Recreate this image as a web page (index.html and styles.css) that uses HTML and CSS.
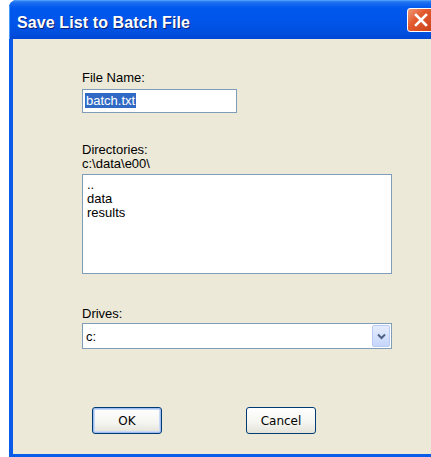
FILE: index.html
```html
<!DOCTYPE html>
<html>
<head>
<meta charset="utf-8">
<title>Save List to Batch File</title>
<link rel="stylesheet" href="styles.css">
</head>
<body>
<div class="window">
  <div class="titlebar">
    <span class="title">Save List to Batch File</span>
    <span class="close">
      <svg width="14" height="14" viewBox="0 0 14 14"><path d="M2 2 L12 12 M12 2 L2 12" stroke="#fff" stroke-width="2.6" stroke-linecap="square"/></svg>
    </span>
  </div>
  <div class="body">
    <div class="field">
      <div class="label">File Name:</div>
      <div class="textbox"><span class="sel">batch.txt</span></div>
    </div>
    <div class="field dirs">
      <div class="label">Directories:</div>
      <div class="label">c:\data\e00\</div>
      <div class="listbox">
        <div class="item">..</div>
        <div class="item">data</div>
        <div class="item">results</div>
      </div>
    </div>
    <div class="field drives">
      <div class="label">Drives:</div>
      <div class="combo">
        <span class="value">c:</span>
        <span class="drop">
          <svg width="9" height="7" viewBox="0 0 9 7"><path d="M1 1.5 L4.5 5 L8 1.5" fill="none" stroke="#4d6185" stroke-width="2"/></svg>
        </span>
      </div>
    </div>
    <div class="buttons">
      <button class="btn default">OK</button>
      <button class="btn">Cancel</button>
    </div>
  </div>
</div>
</body>
</html>
```
FILE: styles.css
```css
html, body {
  margin: 0;
  padding: 0;
  background: #ffffff;
}

body {
  font-family: "Liberation Sans", Arial, sans-serif;
  font-size: 13px;
  color: #000;
}

.window {
  margin-left: 9px;
  width: 422px;
  height: 457px;
  display: flex;
  flex-direction: column;
  background: #0a5ce8;
  border-radius: 8px 0 0 0;
  overflow: hidden;
}

.titlebar {
  height: 39px;
  flex: none;
  display: flex;
  align-items: center;
  justify-content: space-between;
  padding-left: 8px;
  background: linear-gradient(to bottom, #3f8cf3 0px, #1a6cf0 3px, #0058ee 8px, #0055ea 20px, #0050e0 32px, #0047d4 39px);
  box-shadow: inset 1px 1px 0 #4a9cff;
}

.title {
  color: #fff;
  font-family: "Liberation Sans", Arial, sans-serif;
  font-weight: bold;
  font-size: 16px;
  letter-spacing: 0.1px;
  text-shadow: 1px 1px 0 #0a1f73;
  padding-top: 6px;
}

.close {
  width: 27px;
  height: 24px;
  margin-right: -3px;
  margin-top: 1px;
  box-sizing: border-box;
  border: 1px solid #fff;
  border-radius: 3px;
  background: linear-gradient(135deg, #ef9a78 0%, #e35a2e 40%, #c9421b 100%);
  display: flex;
  align-items: center;
  justify-content: center;
}

.body {
  flex: 1;
  margin: 0 0 3px 4px;
  background: #ece9d8;
  padding: 31px 0 0 69px;
  display: flex;
  flex-direction: column;
}

.label {
  line-height: 14px;
  height: 14px;
  padding-top: 1px;
  margin-bottom: -1px;
  color: #000;
}

.textbox {
  margin-top: 5px;
  width: 155px;
  height: 24px;
  box-sizing: border-box;
  background: #fff;
  border: 1px solid #7f9db9;
  padding: 3px 0 0 2px;
  line-height: 16px;
}

.sel {
  background: #316ac5;
  color: #fff;
  padding: 0 1px;
}

.dirs {
  margin-top: 29px;
}

.listbox {
  margin-top: 4px;
  width: 310px;
  height: 100px;
  box-sizing: border-box;
  background: #fff;
  border: 1px solid #7f9db9;
  padding: 3px 0 0 4px;
}

.item {
  line-height: 14px;
}

.drives {
  margin-top: 32px;
}

.combo {
  margin-top: 3px;
  width: 310px;
  height: 26px;
  box-sizing: border-box;
  background: #fff;
  border: 1px solid #7f9db9;
  display: flex;
  align-items: center;
  justify-content: space-between;
  padding: 0 1px 0 3px;
}

.drop {
  width: 18px;
  height: 22px;
  box-sizing: border-box;
  border: 1px solid #b9cbf3;
  border-radius: 2px;
  background: linear-gradient(to bottom, #e4ecfd 0%, #c6d6fb 100%);
  display: flex;
  align-items: center;
  justify-content: center;
}

.buttons {
  margin-top: 58px;
  margin-left: 10px;
  display: flex;
  gap: 84px;
}

.btn {
  width: 70px;
  height: 27px;
  box-sizing: border-box;
  font-family: "DejaVu Sans", Tahoma, sans-serif;
  font-size: 12px;
  color: #000;
  border: 1px solid #003c74;
  border-radius: 3px;
  background: linear-gradient(to bottom, #ffffff 0%, #f4f4f0 60%, #e3e2d9 100%);
  padding: 0;
}

.btn.default {
  box-shadow: inset 0 0 0 1px #9fbcf0, inset 0 0 0 2px #c8d9f7;
}
```
